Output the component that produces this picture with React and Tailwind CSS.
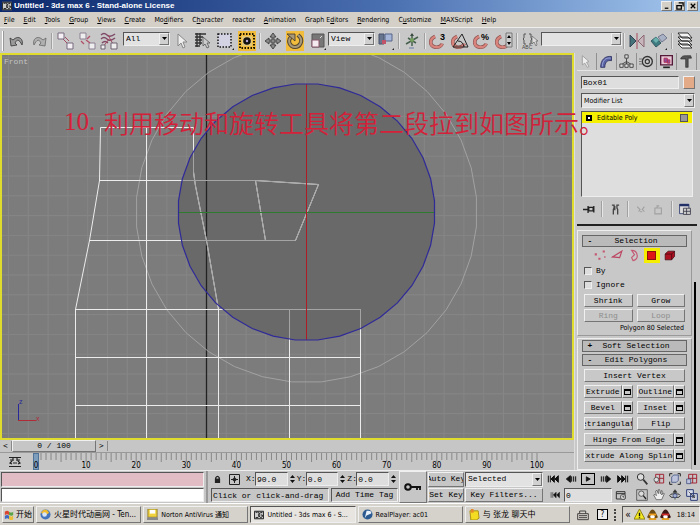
import React, { useState } from 'react';

const raised = 'border border-t-[#f0f0f0] border-l-[#f0f0f0] border-r-[#757575] border-b-[#757575]';
const sunken = 'border border-t-[#555] border-l-[#555] border-r-[#eee] border-b-[#eee]';
const mono = "font-['Liberation_Mono','Noto_Sans_CJK_SC',monospace] text-[8px] leading-[10px]";
const ui = "font-['DejaVu_Sans_Condensed','Noto_Sans_CJK_SC',sans-serif] text-[7px] leading-[10px]";

const MENUS = [
  ['F', 'ile'], ['E', 'dit'], ['T', 'ools'], ['G', 'roup'], ['V', 'iews'], ['C', 'reate'],
  ['', 'Mo', 'd', 'ifiers'], ['', 'C', 'h', 'aracter'], ['', 'reactor'], ['A', 'nimation'],
  ['', 'Graph E', 'd', 'itors'], ['R', 'endering'], ['', 'C', 'u', 'stomize'], ['M', 'AXScript'], ['H', 'elp'],
];

// Toolbar drawings, all on an 18x18 grid
const ICONS = {
  undo: <path d="M2 6l1 8 6-1-2-2c2-4 4-4 7 2 2-5-3-11-9-5z" fill="#999" stroke="#333" strokeWidth=".8" />,
  redo: <path d="M16 6l-1 8-6-1 2-2c-2-4-4-4-7 2-2-5 3-11 9-5z" fill="#b0b0b0" stroke="#666" strokeWidth=".8" />,
  link: (
    <>
      <path d="M5 5l9 9M9 5l4 4" stroke="#a34a62" />
      <path d="M2 1h6v6H2zM11 11h6v6h-6z" fill="#f4f0f4" stroke="#776b80" />
    </>
  ),
  unlink: (
    <>
      <path d="M2 1h6v6H2zM11 11h6v6h-6z" fill="#eee" stroke="#8a8092" />
      <path d="M8 8l4 3M12 4l-3 3M3 9l3 3" stroke="#b0526b" strokeWidth="1.3" />
    </>
  ),
  bind: (
    <>
      <path d="M1 3q3-3 6 0t8-1M1 7q3-3 6 0t8-1M2 11q3-3 6 0" fill="none" stroke="#7d4967" strokeWidth="1.4" />
      <path d="M9 7l-6 8M8 3l5 9" stroke="#a34a62" />
      <path d="M11 11h6v6h-6zM1 13h4v4H1z" fill="#eee" stroke="#6e6275" />
    </>
  ),
  cursor: <path d="M6 2v12l3-3 2 5 2-1-2-5h4z" fill="#eee" stroke="#888" />,
  byName: (
    <>
      <path d="M1 2h11M1 5h8M1 8h7M1 11h7M1 14h5M3 1v14M6 1v12" stroke="#333" strokeWidth="1.4" />
      <path d="M9 5v9l2-2 2 4 2-1-2-4h3z" fill="#ccc" stroke="#555" strokeWidth=".8" />
    </>
  ),
  region: (
    <>
      <path d="M2 2h13v13H2z" fill="#d4d3e3" stroke="#151515" strokeWidth="1.500" strokeDasharray="1.5 1.5" />
      <path d="M16 18h2v-2z" fill="#222" />
    </>
  ),
  windowCross: (
    <>
      <path d="M2 2h14v14H2z" fill="none" stroke="#1c1600" strokeWidth="2" strokeDasharray="1.5 1.5" />
      <path d="M4 4h10v10H4z" fill="#e3c878" />
      <circle cx="9" cy="9" r="3.8" fill="#111" />
      <circle cx="9" cy="9" r="1.2" fill="#b8a7dd" />
    </>
  ),
  move: <path d="M9 1l3 4h-2v3h3V6l4 3-4 3v-2h-3v3h2l-3 4-3-4h2v-3H5v2L1 9l4-3v2h3V5H6z" fill="#888" stroke="#333" strokeWidth=".8" />,
  rotate: (
    <>
      <path d="M5 5C1 9 4 15 9 15s8-6 5-10l-2-2" fill="none" stroke="#54452e" strokeWidth="4" />
      <path d="M5 5C1 9 4 15 9 15s8-6 5-10l-2-2" fill="none" stroke="#a8997a" strokeWidth="2" />
      <path d="M1 2h8v7z" fill="#a8997a" stroke="#41331f" strokeWidth=".8" />
    </>
  ),
  scale: (
    <>
      <path d="M4 2h12v13H4z" fill="#777" stroke="#555" />
      <path d="M4 8h7v7H4z" fill="#f5eaf0" stroke="#86566b" />
      <path d="M12 6l2-2" stroke="#ddd" />
      <path d="M16 18h2v-2z" fill="#222" />
    </>
  ),
  pivot: (
    <>
      <path d="M2 2h5v10H2z" fill="#68758f" stroke="#46506a" />
      <path d="M8 2h7v7H8z" fill="#a4b5d8" stroke="#56658a" />
      <path d="M5 8h4v4H5z" fill="#c2546a" />
      <path d="M15 18h2v-2z" fill="#222" />
    </>
  ),
  manipulate: (
    <>
      <path d="M9 2v12M3 12l12-7M5 6l8 5" stroke="#45604c" strokeWidth="1.5" />
      <circle cx="9" cy="8" r="2" fill="#76a05f" />
      <path d="M6 15h5v2H6z" fill="#99a3b8" />
      <path d="M9 1l2 3H7z" fill="#3d4b42" />
    </>
  ),
  layers: (
    <path d="M2 12h10l4 4H6zM2 9h10l4 4H6zM2 5h10l4 4H6zM2 1h10l4 5H6z" fill="#f4f4f4" stroke="#222" strokeWidth=".9" />
  ),
  mirror: (
    <>
      <path d="M2 3v12l6-6z" fill="#46727a" stroke="#345" />
      <path d="M16 3v12l-6-6z" fill="#c7b5bc" stroke="#8b6472" />
      <path d="M9 1v16" stroke="#a34a5f" />
    </>
  ),
  align: (
    <>
      <path d="M1 9l5-4 5 6-5 4z" fill="#3d7b80" stroke="#375962" />
      <path d="M8 5l5-3 4 4-5 4z" fill="#a9b1c5" stroke="#737990" />
      <path d="M6 5l3 3-3 3-3-3z" fill="#6bb0ad" />
      <path d="M15 18h2v-2z" fill="#222" />
    </>
  ),
};

function Icon({ name, children, size = 'size-[18px]' }) {
  return (
    <svg viewBox="0 0 18 18" className={`${size} shrink-0`} fill="none" aria-hidden="true">
      {name ? ICONS[name] : children}
    </svg>
  );
}

const Magnet = () => (
  <>
    <path d="M3 7c-3 6 2 11 7 8 3-2 4-5 3-7" stroke="#8c5350" strokeWidth="3.600" transform="rotate(40 8 10)" />
    <path d="M3 7c-3 6 2 11 7 8 3-2 4-5 3-7" stroke="#d8837c" strokeWidth="2.400" transform="rotate(40 8 10)" />
  </>
);

function Tool({ label, name, active, children }) {
  return (
    <button
      aria-label={label}
      className={`flex h-5 w-[22px] shrink-0 items-center justify-center ${active ? 'bg-[#f2bd3c] bg-clip-content px-[2px]' : ''}`}
    >
      <Icon name={name}>{children}</Icon>
    </button>
  );
}

const Sep = () => <span className="mx-px h-4 w-[2px] shrink-0 border-l border-[#a0a0a0] bg-[#e6e6e6]" />;

function Select({ label, options, className = '', font = mono }) {
  return (
    <div className={`relative shrink-0 bg-[#e2e2e2] ${sunken} ${className}`}>
      <select aria-label={label} className={`block h-full w-full appearance-none bg-transparent pl-[2px] outline-none ${font}`}>
        {options.map((o) => (
          <option key={o}>{o}</option>
        ))}
      </select>
      <span className={`pointer-events-none absolute inset-y-0 right-0 flex w-[10px] items-center justify-center bg-[#d0d0d0] ${raised}`}>
        <svg viewBox="0 0 5 3" className="h-[3px] w-[5px]">
          <path d="M0 0h5L2.500 3z" fill="#000" />
        </svg>
      </span>
    </div>
  );
}

function Toolbar() {
  return (
    <div className="flex h-[26px] items-center overflow-hidden border-t border-[#eee] bg-[#c9c8c8]">
      <span className="mx-[2px] h-5 w-[2px] shrink-0 border-l border-white bg-[#999]" />
      <Tool label="Undo" name="undo" />
      <Tool label="Redo" name="redo" />
      <Sep />
      <Tool label="Select and Link" name="link" />
      <Tool label="Unlink Selection" name="unlink" />
      <Tool label="Bind to Space Warp" name="bind" />
      <Select label="Selection Filter" options={['All']} className="ml-[3px] mb-[4px] h-[14px] w-[47px]" />
      <Tool label="Select Object" name="cursor" />
      <Tool label="Select by Name" name="byName" />
      <Tool label="Selection Region" name="region" />
      <Tool label="Window/Crossing" name="windowCross" active />
      <Sep />
      <Tool label="Select and Move" name="move" />
      <Tool label="Select and Rotate" name="rotate" active />
      <Tool label="Select and Scale" name="scale" />
      <Select label="Reference Coordinate System" options={['View']} className="mb-[4px] h-[14px] w-[47px]" />
      <Tool label="Use Pivot Point Center" name="pivot" />
      <Sep />
      <Tool label="Select and Manipulate" name="manipulate" />
      <Sep />
      <Tool label="Snap Toggle">
        <Magnet />
        <text x="11" y="8" fontSize="9" fontWeight="bold" fill="#000" fontFamily="Liberation Sans">3</text>
      </Tool>
      <Tool label="Angle Snap">
        <Magnet />
        <path d="M2 15L11 2l6 13zM7 9q5 0 6 6" stroke="#222" />
      </Tool>
      <Tool label="Percent Snap">
        <Magnet />
        <text x="8" y="8" fontSize="9" fontWeight="bold" fill="#000" fontFamily="Liberation Sans">%</text>
      </Tool>
      <Tool label="Spinner Snap">
        <Magnet />
        <path d="M11 1h6v14h-6z" fill="#ccc" stroke="#777" />
        <path d="M12 6l2-3 2 3zM12 10l2 3 2-3z" fill="#000" />
      </Tool>
      <Sep />
      <Tool label="Edit Named Selection Sets">
        <path d="M5 2H3v4L2 7l1 1v4h2M8 2h2v4l1 1-1 1v4H8" stroke="#555" />
        <path d="M11 4v8l2-2 2 4 1-1-1-4h2z" fill="#ddd" stroke="#666" strokeWidth=".7" />
        <text x="1" y="17" fontSize="5" fill="#444" fontFamily="Liberation Sans">ABC</text>
      </Tool>
      <Select label="Named Selection Sets" options={['']} className="mb-[4px] h-[14px] w-[81px]" />
      <Sep />
      <Tool label="Mirror" name="mirror" />
      <Tool label="Align" name="align" />
      <Sep />
      <Tool label="Layer Manager" name="layers" />
    </div>
  );
}

const range = (from, step, to) => {
  const out = [];
  for (let v = from; v < to; v += step) out.push(v);
  return out;
};

// The gizmo is drawn as a 36-sided ring, as the program draws it
const ring = (cx, cy, r) =>
  Array.from({ length: 36 }, (_, i) => {
    const a = ((i + 0.5) * Math.PI) / 18;
    return `${(cx + r * Math.cos(a)).toFixed(1)},${(cy + r * Math.sin(a)).toFixed(1)}`;
  }).join(' ');

const MESH = 'M99.500 180.500L89.500 240.500L75.500 309.500V440M100.500 127.500L99.500 180.500M100.500 127.500H193.500V172L195.500 186L206.500 240.500L218.500 309.500V440M146.500 127V440M99 180.500H255.500L318.500 184.500L295.500 240.500H89M255.500 180.500L265.500 240.500M75 309.500H361M75 357.500H361M75 405.500H361M289.500 309V440M360.500 309V440';

function Viewport() {
  return (
    <section aria-label="Front viewport" className="relative min-h-0 flex-1 border-2 border-[#dfdc2e] bg-[#7c7c7c]">
      <svg viewBox="2 55 571 383" preserveAspectRatio="xMinYMin slice" className="absolute inset-0 h-full w-full" fill="none">
        <defs>
          <clipPath id="disc">
            <polygon points={ring(306.5, 212, 128.5)} />
          </clipPath>
        </defs>
        <g stroke="#868686">
          {range(8.5, 19.8, 573).map((x) => (
            <path key={x} d={`M${x} 55V440`} />
          ))}
          {range(57.2, 19.8, 440).map((y) => (
            <path key={y} d={`M2 ${y}H573`} />
          ))}
        </g>
        <polygon points={ring(306.5, 212, 128.5)} fill="#696969" />
        <path d="M206.500 55V440" stroke="#222" strokeWidth="1.3" />
        <polygon points={ring(306.5, 212, 170.5)} stroke="#a2a2a2" />
        <path d={MESH} stroke="#ececec" />
        <g clipPath="url(#disc)">
          <path d={MESH} stroke="#a4a4a4" />
        </g>
        <path d="M179 212.500H434" stroke="#2e7a2e" />
        <path d="M306.500 84V340" stroke="#b01c26" />
        <polygon points={ring(306.5, 212, 128.5)} stroke="#2f2a98" strokeWidth="1.2" />
        <path d="M18.500 404V420" stroke="#28289a" />
        <path d="M18 420.500H36" stroke="#b02a38" />
        <text x="19" y="404" fontSize="7" fill="#28289a" fontFamily="Liberation Sans">z</text>
        <text x="36" y="421" fontSize="7" fill="#b02a38" fontFamily="Liberation Sans">x</text>
      </svg>
      <span className={`absolute top-[2px] left-[2px] text-[#c4c4c4] ${mono}`}>Front</span>
      <p className="absolute top-[51px] left-[62px] z-10 flex whitespace-nowrap text-[25px] leading-[32px] text-[#d3213a]">
        <span className="w-10 font-['Liberation_Serif',serif]">10.</span>
        <span className="font-['Noto_Sans_CJK_SC',sans-serif] font-[350]">利用移动和旋转工具将第二段拉到如图所示。</span>
      </p>
    </section>
  );
}

function TimeTrack() {
  return (
    <>
      <div className={`flex h-3 shrink-0 items-center ${ui}`}>
        <button aria-label="Previous frame" className="w-3 border-r border-[#888]">&lt;</button>
        <div className={`h-3 w-[84px] text-center ${raised} ${mono}`}>0 / 100</div>
        <button aria-label="Next frame" className="w-3 border-r border-[#888]">&gt;</button>
      </div>
      <div className="flex h-[18px] shrink-0 border-t border-[#999]">
        <button aria-label="Open Mini Curve Editor" className="flex w-9 items-center justify-center pr-[7px]">
          <svg viewBox="0 0 14 12" className="h-3 w-[14px]" stroke="#222" fill="none">
            <path d="M1 1.500h12M1 10.500h12M2 4h3M9 4h3M4 8L2 7l2-2M10 8l2-1-2-2M5 7h4M5 2v3M9 2v3" strokeWidth="1.2" />
          </svg>
        </button>
        <div className="relative mr-[37px] flex-1">
          <svg viewBox="0 0 501 9" preserveAspectRatio="none" className="h-[9px] w-full overflow-visible">
            {range(0, 1, 101).map((t) => (
              <path key={t} d={`M${t * 5.01} 0V${t % 5 === 0 ? 9 : 7}`} stroke="#888" />
            ))}
          </svg>
          <span className="absolute -left-[3px] top-0 h-[17px] w-[6px] border border-[#4e7298] bg-[#7d9dbd]" />
          <div className={`absolute inset-x-0 top-[8px] flex justify-between ${ui} text-[8px]`}>
            {range(0, 10, 101).map((t) => (
              <span key={t} className="flex w-0 justify-center">{t}</span>
            ))}
          </div>
        </div>
      </div>
    </>
  );
}

const TABS = [
  ['Create', <path d="M4 2l8 7-3 1 3 5-2 1-3-5-3 2z" fill="#eee" stroke="#999" />],
  ['Modify', <><path d="M2 16C2 7 7 2 15 3v5c-5-1-8 2-8 8z" fill="#5862a2" stroke="#2b3060" /><path d="M4 15c0-7 4-11 10-10" stroke="#a6aee0" /></>],
  ['Hierarchy', <><path d="M9 5v4M9 9l-5 3M9 9l5 3M9 9v4" stroke="#333" /><path d="M7 1h4v4H7zM1 12h4v4H1zM7 12h4v4H7zM13 12h4v4h-4z" fill="#ddd" stroke="#333" /></>],
  ['Motion', <><circle cx="10" cy="9" r="6" stroke="#333" strokeWidth="1.6" /><circle cx="10" cy="9" r="2.500" stroke="#333" strokeWidth="1.4" /><path d="M0 6h4M0 9h3M0 12h4" stroke="#666" /></>],
  ['Display', <><path d="M2 2h14v11H2z" fill="#e7c8d6" stroke="#551a38" strokeWidth="1.600" /><path d="M6 5h4v5H6zM10 7h3v4h-3z" fill="#8e4c9a" stroke="#b52d51" /><path d="M5 16h8" stroke="#222" strokeWidth="2" /></>],
  ['Utilities', <path d="M2 6c1-4 4-4 7-4h5l1 3h-4v11H8V6z" fill="#555" stroke="#222" strokeWidth=".7" />],
];

function PanelButton({ children, disabled, settings, className = '' }) {
  return (
    <div className={`flex h-[13px] min-w-0 flex-1 ${className}`}>
      <button
        disabled={disabled}
        className={`flex min-w-0 flex-1 items-center justify-center overflow-hidden whitespace-nowrap disabled:text-[#8d8d8d] ${raised}`}
      >
        {children}
      </button>
      {settings && (
        <button aria-label={`${children} settings`} className={`flex w-[11px] items-center justify-center ${raised}`}>
          <span className="h-[6px] w-[7px] border border-t-2 border-black" />
        </button>
      )}
    </div>
  );
}

function RollupHeader({ sign, children }) {
  return (
    <button className="flex h-3 w-full shrink-0 items-center border border-[#666] bg-[#bababa] pr-[7px] pl-1">
      <span className="w-[6px] font-bold">{sign}</span>
      <span className="flex-1">{children}</span>
    </button>
  );
}

function CommandPanel() {
  const [name, setName] = useState('Box01');
  return (
    <aside className={`flex w-[126px] shrink-0 flex-col border-l border-[#ddd] bg-[#c8c8c8] pl-[2px] ${mono}`}>
      <div className="flex h-[18px] shrink-0 border-b border-[#e5e5e5]">
        {TABS.map(([label, art]) => (
          <button key={label} aria-label={label} className="flex w-5 items-center justify-center border-r border-[#909090]">
            <Icon size="size-[15px]">{art}</Icon>
          </button>
        ))}
      </div>
      <div className="flex flex-col pr-[5px] pl-1">
        <div className="mt-[5px] flex gap-1">
          <input
            aria-label="Object name"
            value={name}
            onChange={(e) => setName(e.target.value)}
            className={`h-[13px] min-w-0 flex-1 bg-[#dedede] px-px outline-none ${sunken}`}
          />
          <button aria-label="Object color" className={`h-[13px] w-3 bg-[#e2aa86] ${raised}`} />
        </div>
        <Select label="Modifier List" options={['Modifier List']} className="mt-1 h-[15px]" font={ui} />
        <div className={`mt-[3px] mr-[2px] h-[86px] bg-[#dedede] ${sunken} ${ui}`}>
          <button className="flex h-[11px] w-full items-center bg-[#f5ef00] pr-1 pl-1">
            <span className="flex size-[6px] items-center justify-center bg-black">
              <span className="size-[2px] bg-white" />
            </span>
            <span className="ml-[5px] flex-1 text-left">Editable Poly</span>
            <span className="size-2 border border-[#555] bg-[#999]" />
          </button>
        </div>
      </div>
      <div className="mt-[3px] flex h-[18px] shrink-0 items-center justify-between pr-2 pl-[6px]">
        <button aria-label="Pin Stack">
          <Icon size="size-[13px]"><path d="M0 9h7M7 4v10M8 6h6v5H8zM15 4v9" stroke="#222" strokeWidth="1.800" /></Icon>
        </button>
        <Sep />
        <button aria-label="Show End Result">
          <Icon size="size-[13px]"><path d="M4 3h3v4l-1 2v7M14 3h-3v4l1 2v7M8 4v6" stroke="#444" strokeWidth="1.800" /></Icon>
        </button>
        <Sep />
        <button aria-label="Make Unique" disabled>
          <Icon size="size-[13px]"><path d="M3 5l4 4-2 3M13 5l-3 4 3 3M7 12h3" stroke="#a0a0a0" strokeWidth="1.500" /></Icon>
        </button>
        <button aria-label="Remove Modifier" disabled>
          <Icon size="size-[13px]"><path d="M4 7h9v8H4zM7 7V4h3" stroke="#a0a0a0" strokeWidth="1.500" /></Icon>
        </button>
        <Sep />
        <button aria-label="Configure Modifier Sets">
          <Icon size="size-[14px]"><path d="M2 3h12v12H2z" fill="#ddd" stroke="#223068" /><path d="M2 4h12" stroke="#223068" strokeWidth="3" /><path d="M7 8h9v8H7zM7 12h9M11 8v8" fill="#ccc" stroke="#334" /></Icon>
        </button>
      </div>
      <div className="mt-[6px] mr-[3px] h-[2px] shrink-0 bg-[#222]" />
      <div className="mt-1 flex flex-1 pr-1">
        <div className="flex min-w-0 flex-1 flex-col">
          <section className="flex flex-col border border-[#eee] border-r-[#999] border-b-[#999] px-1 pt-1 pb-[2px]">
            <RollupHeader sign="-">Selection</RollupHeader>
            <div className="my-px flex h-[15px] items-center justify-center gap-[2px]">
              <button aria-label="Vertex" className="flex w-[15px] justify-center">
                <Icon size="size-[13px]"><path d="M1 6h3v3H1zM6 12h3v3H6zM12 2h3v3h-3zM14 10h2v2h-2z" fill="#c45872" /></Icon>
              </button>
              <button aria-label="Edge" className="flex w-[15px] justify-center">
                <Icon size="size-[13px]"><path d="M2 11L15 3l-3 9z" stroke="#bc4762" strokeWidth="1.600" /></Icon>
              </button>
              <button aria-label="Border" className="flex w-[15px] justify-center">
                <Icon size="size-[13px]"><path d="M5 2c9 0 11 13 2 14l-2-4 4-4z" stroke="#c45872" strokeWidth="1.600" /></Icon>
              </button>
              <button aria-label="Polygon" className="flex h-[15px] w-[16px] items-center justify-center bg-[#f6ee00]">
                <span className="size-[9px] border border-[#8d1111] bg-[#e01616]" />
              </button>
              <button aria-label="Element" className="flex w-[15px] justify-center">
                <Icon size="size-[13px]"><path d="M3 7l4-4h9v7l-4 5H3z" fill="#ad1020" stroke="#3c0710" /><path d="M3 7h9v8M12 7l4-4" stroke="#3c0710" /></Icon>
              </button>
            </div>
            {['By', 'Ignore'].map((label) => (
              <label key={label} className="ml-[2px] flex h-[14px] items-center gap-1">
                <input type="checkbox" className={`size-2 appearance-none bg-[#ddd] checked:bg-black ${sunken}`} />
                {label}
              </label>
            ))}
            <div className="mt-[2px] flex gap-1 px-[2px]">
              <PanelButton>Shrink</PanelButton>
              <PanelButton>Grow</PanelButton>
            </div>
            <div className="mt-[2px] flex gap-1 px-[2px]">
              <PanelButton disabled>Ring</PanelButton>
              <PanelButton disabled>Loop</PanelButton>
            </div>
            <p className={`mt-px pr-[3px] text-right ${ui}`}>Polygon 80 Selected</p>
          </section>
          <section className="mt-[2px] flex flex-1 flex-col border border-[#eee] border-r-[#999] px-1 pt-px">
            <RollupHeader sign="+">Soft Selection</RollupHeader>
            <div className="mt-[2px] flex"><RollupHeader sign="-">Edit Polygons</RollupHeader></div>
            <div className="mt-[3px] flex flex-col gap-[3px] px-[2px]">
              <PanelButton className="flex-none">Insert Vertex</PanelButton>
              <div className="flex gap-1">
                <PanelButton settings>Extrude</PanelButton>
                <PanelButton settings>Outline</PanelButton>
              </div>
              <div className="flex gap-1">
                <PanelButton settings>Bevel</PanelButton>
                <PanelButton settings>Inset</PanelButton>
              </div>
              <div className="flex gap-1">
                <PanelButton>Retriangulate</PanelButton>
                <PanelButton>Flip</PanelButton>
              </div>
              <PanelButton className="flex-none" settings>Hinge From Edge</PanelButton>
              <PanelButton className="flex-none" settings>Extrude Along Spline</PanelButton>
            </div>
          </section>
        </div>
        <div className="mt-[52px] mb-[5px] ml-[2px] w-[2px] bg-black" />
      </div>
    </aside>
  );
}

function Coord({ axis, value }) {
  return (
    <label className="flex min-w-0 flex-1 items-center">
      <span className="w-[9px] shrink-0">{axis}:</span>
      <input defaultValue={value} className={`h-[14px] min-w-0 flex-1 bg-[#dedede] px-px outline-none ${sunken}`} />
      <svg viewBox="0 0 5 8" className="mx-[2px] h-2 w-[5px] shrink-0" aria-hidden="true">
        <path d="M0 3l2.500-3L5 3zM0 5l2.500 3L5 5z" fill="#111" />
      </svg>
    </label>
  );
}

const PLAYBACK = [
  ['Go to Start', 'M2 4v10M5 4v10M11 4L6 9l5 5zM17 4l-5 5 5 5z'],
  ['Previous Frame', 'M8 4L2 9l6 5zM10 5v8M13 5v8M16 5v8'],
  ['Play Animation', 'M6 5v8l7-4z'],
  ['Next Frame', 'M10 4l6 5-6 5zM2 5v8M5 5v8M8 5v8'],
  ['Go to End', 'M16 4v10M13 4v10M7 4l5 5-5 5zM1 4l5 5-5 5z'],
];

const NAV = [
  ['Zoom', <><circle cx="7" cy="6" r="5" fill="#ddd" stroke="#333" strokeWidth="1.500" /><path d="M11 10l6 7" stroke="#333" strokeWidth="2.500" /></>],
  ['Zoom All', <><path d="M4 2h12v13H4zM4 8h12M10 2v13" stroke="#a32838" strokeWidth="1.500" /><circle cx="5" cy="10" r="3.500" fill="#ddd" stroke="#333" /></>],
  ['Zoom Extents', <><path d="M1 5V1h4M13 1h4v4M1 13v4h4M17 13v4h-4" stroke="#222" strokeWidth="1.500" /><path d="M4 6l3-3h7v8l-3 3H4z" fill="#bcc3da" stroke="#2b3c75" /></>],
  ['Zoom Extents All', <><path d="M4 2h12v13H4zM4 8h12M10 2v13" stroke="#a32838" strokeWidth="1.500" /><path d="M1 9h6v7H1z" fill="#bcc3da" stroke="#2b3c75" /></>],
  ['Region Zoom', <><path d="M1 1h16v16H1z" stroke="#333" /><circle cx="8" cy="7" r="4" fill="#ddd" stroke="#222" /><path d="M11 10l4 5" stroke="#222" strokeWidth="2" /></>],
  ['Pan', <path d="M5 16L1 9l2-1 2 2-1-7 2-1 2 5V1h2l1 6 2-5 1 1-1 6 2-3 2 1-4 9z" fill="#eee" stroke="#444" />],
  ['Arc Rotate', <><ellipse cx="9" cy="10" rx="8" ry="3" stroke="#333" strokeWidth="1.400" /><path d="M9 1l3 4H6zM9 4v12" fill="#333" stroke="#333" /><circle cx="9" cy="10" r="3" fill="#a5b0cf" stroke="#2b3c75" /></>],
  ['Min/Max Toggle', <><path d="M1 1h10v10H1zM7 7h10v10H7z" fill="#d8dcea" stroke="#2b3c75" strokeWidth="1.500" /><path d="M4 4l9 9M13 9v4H9" stroke="#222" /></>],
];

function StatusBar() {
  return (
    <footer className={`flex h-[33px] shrink-0 border-t border-[#eee] bg-[#c6c6c6] ${mono}`}>
      <div className="flex w-[206px] shrink-0 flex-col gap-px py-px pr-[2px] pl-px">
        <input aria-label="Macro recorder" className={`min-h-0 flex-1 bg-[#e1bcc4] ${sunken}`} />
        <input aria-label="Listener" className={`min-h-0 flex-1 bg-white ${sunken}`} />
      </div>
      <div className="flex min-w-[190px] flex-1 flex-col border-l-2 border-[#999] pl-[3px]">
        <div className="flex h-4 items-center">
          <button aria-label="Selection Lock Toggle" className="flex w-[13px] justify-center">
            <svg viewBox="0 0 8 10" className="h-[9px] w-[7px]"><path d="M2 5V3q2-3 4 0v2" fill="none" stroke="#222" strokeWidth="1.500" /><path d="M1 4h6v5H1z" fill="#222" /></svg>
          </button>
          <button aria-label="Absolute Mode" className="mr-[2px] flex w-[20px] justify-center">
            <svg viewBox="0 0 11 11" className="size-[11px]" fill="none" stroke="#222"><path d="M.5.5h10v10H.5zM5.500 2v7M2 5.500h7" /><circle cx="5.500" cy="5.500" r="1.500" fill="#222" /></svg>
          </button>
          <Coord axis="X" value="90.0" />
          <Coord axis="Y" value="0.0" />
          <Coord axis="Z" value="0.0" />
        </div>
        <div className="flex h-4 items-center whitespace-nowrap">
          <p className={`h-[14px] flex-1 pl-px leading-[13px] ${sunken}`}>Click or click-and-drag</p>
          <button className={`ml-[2px] h-[14px] w-[67px] ${sunken}`}>Add Time Tag</button>
        </div>
      </div>
      <button aria-label="Set Keys" className={`mx-px flex w-7 shrink-0 items-center justify-center ${raised}`}>
        <svg viewBox="0 0 18 8" className="h-2 w-[18px]" fill="none" stroke="#111">
          <circle cx="4" cy="4" r="2.800" strokeWidth="2" />
          <path d="M7 4h10M13 4v3M16 4v3" strokeWidth="1.800" />
        </svg>
      </button>
      <div className="flex w-9 shrink-0 flex-col gap-px py-px">
        <button className={`flex min-h-0 flex-1 items-center justify-center overflow-hidden whitespace-nowrap ${raised}`}>Auto Key</button>
        <button className={`flex min-h-0 flex-1 items-center justify-center overflow-hidden whitespace-nowrap ${raised}`}>Set Key</button>
      </div>
      <div className="flex w-20 shrink-0 flex-col gap-px p-px">
        <Select label="Key set" options={['Selected']} className="min-h-0 flex-1" />
        <button className={`min-h-0 flex-1 ${raised}`}>Key Filters...</button>
      </div>
      <div className="ml-[2px] flex w-[84px] shrink-0 flex-col">
        <div className="flex h-4 items-center justify-between">
          {PLAYBACK.map(([label, d], i) => (
            <button key={label} aria-label={label} className={`flex w-[14px] justify-center ${i === 2 ? 'border border-black' : ''}`}>
              <Icon size={i === 2 ? 'size-[10px]' : 'size-3'}><path d={d} fill="#111" stroke="#111" strokeWidth="1.500" /></Icon>
            </button>
          ))}
        </div>
        <div className="flex h-4 items-center">
          <button aria-label="Key Mode Toggle" className="flex w-[18px] justify-center">
            <Icon size="size-[10px]"><path d={PLAYBACK[0][1]} fill="#111" stroke="#111" /></Icon>
          </button>
          <input aria-label="Current frame" defaultValue="0" className={`h-[14px] min-w-0 flex-1 bg-[#dedede] px-px outline-none ${sunken}`} />
          <button aria-label="Time Configuration" className="flex w-[18px] justify-center">
            <Icon size="size-[12px]"><path d="M2 4h13v11H2zM2 7h13" stroke="#333" strokeWidth="1.500" /><circle cx="12" cy="12" r="4" fill="#ccc" stroke="#333" /><path d="M12 10v2h2" stroke="#111" /></Icon>
          </button>
        </div>
      </div>
      <div className="ml-1 grid w-[66px] shrink-0 grid-cols-4 grid-rows-2 place-items-center">
        {NAV.map(([label, art]) => (
          <button key={label} aria-label={label}><Icon size="size-3">{art}</Icon></button>
        ))}
      </div>
    </footer>
  );
}

const MaxLogo = () => (
  <svg viewBox="0 0 12 12" className="size-[10px] shrink-0" fill="none">
    <path d="M0 1h12v10H0z" fill="#ccc" />
    <path d="M2 3q5-2 4 3 0 4-4 3M10 3Q5 3 6 7q2 4 4 1V6H8M.5 1.500h11v9H.5z" stroke="#222" strokeWidth="1.200" />
  </svg>
);

const TASKS = [
  ['火星时代动画网 - Ten...', <svg viewBox="0 0 12 12" className="size-[11px] shrink-0"><circle cx="6" cy="6" r="5.500" fill="#4374bd" /><path d="M1 4q5-7 9 0l-4 3z" fill="#f2bb2d" /><circle cx="5" cy="6" r="2.500" fill="#d7e5f5" /></svg>],
  ['Norton AntiVirus 通知', <svg viewBox="0 0 12 12" className="size-[11px] shrink-0"><path d="M1 0h10v9H1z" fill="#f0d33e" stroke="#927c22" /><path d="M3 1h6v4H3z" fill="#fff" /><path d="M0 9h12v3H0z" fill="#8a8a8a" /></svg>],
  ['Untitled - 3ds max 6 - S...', <MaxLogo />],
  ['RealPlayer: ac01', <svg viewBox="0 0 12 12" className="size-[11px] shrink-0"><circle cx="6" cy="6" r="5.500" fill="#2c5b91" /><path d="M3 10L5 2q6-1 5 3L5 7z" fill="#e8f0fa" /></svg>],
  ['与 张龙 聊天中', <svg viewBox="0 0 12 12" className="size-[11px] shrink-0"><path d="M1 2h9l1 8-3 2H2z" fill="#f4dc22" stroke="#a68d12" /><path d="M2 0h3v4H2z" fill="#e58a2b" /></svg>],
];

const Penguin = ({ scarf, body }) => (
  <svg viewBox="0 0 12 12" className="size-[11px] shrink-0">
    <path d="M2 5q4-9 8 0l2 4-2 1q-4 3-8 0L0 9z" fill={body} />
    <ellipse cx="6" cy="8.500" rx="2.500" ry="2.500" fill="#fff" />
    <path d="M2 5h8v2H2z" fill={scarf} />
    <path d="M2 11h8" stroke="#e8a020" strokeWidth="2" />
  </svg>
);

function Taskbar() {
  return (
    <nav className={`flex h-[22px] shrink-0 items-center gap-[2px] border-t border-white bg-[#d5d1cb] pl-[2px] ${ui}`}>
      <button className={`flex h-[17px] w-8 shrink-0 items-center gap-[2px] pl-px text-[8px] ${raised}`}>
        <svg viewBox="0 0 12 12" className="size-[10px]">
          <path d="M1 2q3-2 5 0v4Q4 4 1 6z" fill="#da4630" />
          <path d="M6 2q3 2 5 0v4q-2 2-5 0z" fill="#5aa445" />
          <path d="M1 7q3-2 5 0v4q-2-2-5 0z" fill="#3e68c0" />
          <path d="M6 7q3 2 5 0v4q-2 2-5 0z" fill="#edbf36" />
        </svg>
        开始
      </button>
      {TASKS.map(([label, art], i) => (
        <button
          key={label}
          className={`flex h-[17px] min-w-0 flex-1 items-center gap-[3px] overflow-hidden pl-[3px] whitespace-nowrap ${
            i === 2 ? `bg-[#e8e5e1] ${sunken}` : raised
          } ${i === 0 || i === 4 ? 'text-[8px]' : ''}`}
        >
          {art}
          {label}
        </button>
      ))}
      <button aria-label="Keyboard layout" className="ml-[5px] shrink-0">
        <Icon size="size-3"><path d="M1 7h16v9H1zM4 7V3h9v4M3 10h12M3 13h12" stroke="#444" strokeWidth="1.500" /></Icon>
      </button>
      <button aria-label="Input method help" className="ml-[6px] flex size-[11px] shrink-0 items-center justify-center border border-black bg-[#eee] text-[8px]">?</button>
      <span className="mx-1 h-3 border-l-2 border-dotted border-[#444]" />
      <div className={`flex h-[17px] w-[78px] shrink-0 items-center gap-[2px] pr-1 pl-px ${sunken}`}>
        <button aria-label="Show hidden icons" className="w-2 text-[10px]">«</button>
        <svg viewBox="0 0 12 12" className="size-[11px] shrink-0">
          <path d="M6 0l6 11H0z" fill="#f5ea20" stroke="#857a10" />
          <path d="M6 4v4M6 9v1" stroke="#111" strokeWidth="1.500" />
        </svg>
        <Penguin body="#6d4d15" scarf="#f0a020" />
        <Penguin body="#3b1715" scarf="#d02c2c" />
        <time className="flex-1 text-right">18:14</time>
      </div>
    </nav>
  );
}

function App() {
  return (
    <div className="flex min-h-screen flex-col overflow-hidden bg-[#c6c6c6] text-black">
      <header className="flex h-3 shrink-0 items-center gap-[2px] bg-linear-to-r from-[#0b276b] via-[#4a6fb0] via-55% to-[#a5c8ee] px-[2px]">
        <MaxLogo />
        <h1 className="flex-1 font-['Liberation_Sans',sans-serif] text-[8px] leading-3 font-bold text-white">
          Untitled - 3ds max 6 - Stand-alone License
        </h1>
        {[['Minimize', 'M2 7h4'], ['Restore', 'M3 1h5v4M1 4h5v4H1zM1 4h5'], ['Close', 'M2 2l5 5M7 2L2 7']].map(([label, d]) => (
          <button key={label} aria-label={label} className={`flex h-[10px] w-[11px] items-center justify-center bg-[#d4d0c8] ${raised}`}>
            <svg viewBox="0 0 9 9" className="size-2" fill="none" stroke="#000" strokeWidth="1.400"><path d={d} /></svg>
          </button>
        ))}
      </header>
      <div role="menubar" className={`flex h-[15px] shrink-0 items-center gap-[9px] bg-[#d4d0c8] px-1 whitespace-nowrap ${ui}`}>
        {MENUS.map(([first, rest, key, tail]) => (
          <button key={rest} role="menuitem">
            <u>{first}</u>
            {rest}
            <u>{key}</u>
            {tail}
          </button>
        ))}
      </div>
      <Toolbar />
      <main className="flex flex-1">
        <div className="flex min-w-0 flex-1 flex-col">
          <Viewport />
          <TimeTrack />
        </div>
        <CommandPanel />
      </main>
      <StatusBar />
      <Taskbar />
    </div>
  );
}

export default App;
